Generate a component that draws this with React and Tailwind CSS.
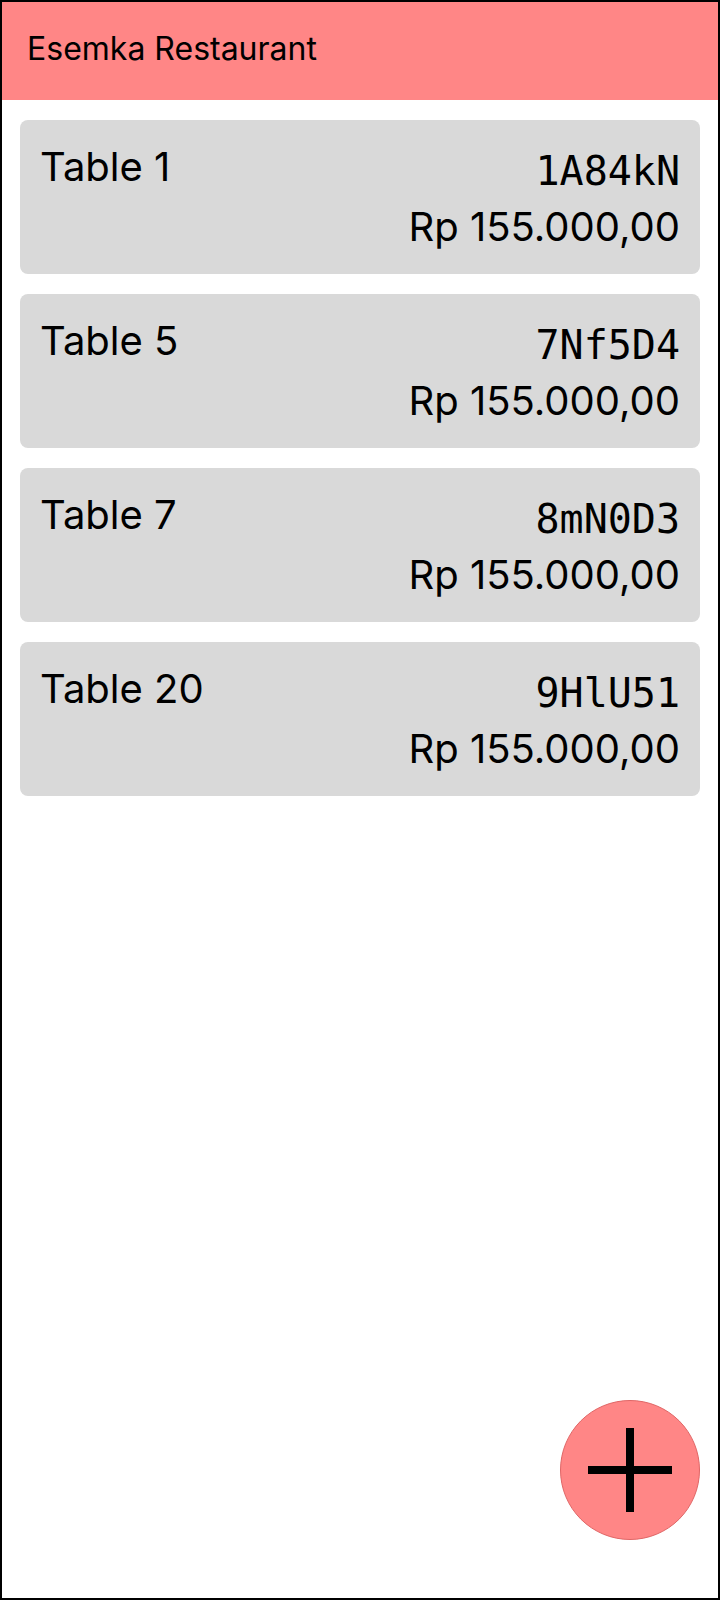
import React from 'react';

const orders = [
  { table: 'Table 1', code: '1A84kN', total: 'Rp 155.000,00' },
  { table: 'Table 5', code: '7Nf5D4', total: 'Rp 155.000,00' },
  { table: 'Table 7', code: '8mN0D3', total: 'Rp 155.000,00' },
  { table: 'Table 20', code: '9HlU51', total: 'Rp 155.000,00' },
];

const OrderCard = ({ order }) => (
  <div className="h-[154px] bg-[#d9d9d9] rounded-[8px] px-[20px] flex justify-between items-start">
    <p className="mt-[23px] text-[40px] leading-[48px] text-black">{order.table}</p>
    <div className="flex flex-col items-end">
      <p className="mt-[27px] text-[40px] leading-[48px] text-black font-['DejaVu_Sans_Mono',monospace]">
        {order.code}
      </p>
      <p className="mt-[8px] text-[40px] leading-[48px] text-black">{order.total}</p>
    </div>
  </div>
);

const App = () => {
  return (
    <div className="relative w-[720px] h-[1600px] border-2 border-black bg-white flex flex-col font-['Inter',sans-serif]">
      {/* Header */}
      <div className="h-[98px] bg-[#ff8686] px-[25px] flex items-center">
        <h1 className="text-[32px] leading-none text-black mt-[-4px]">Esemka Restaurant</h1>
      </div>

      {/* Order list */}
      <div className="px-[18px] pt-[20px] flex flex-col gap-[20px]">
        {orders.map((order) => (
          <OrderCard key={order.code} order={order} />
        ))}
      </div>

      {/* Add button */}
      <button className="absolute right-[18px] bottom-[58px] w-[140px] h-[140px] rounded-full bg-[#ff8686] border-[1.5px] border-[#e06666] flex items-center justify-center">
        <svg width="84" height="84" viewBox="0 0 84 84">
          <rect x="38" y="0" width="8" height="84" fill="black" />
          <rect x="0" y="38" width="84" height="8" fill="black" />
        </svg>
      </button>
    </div>
  );
};

export default App;
